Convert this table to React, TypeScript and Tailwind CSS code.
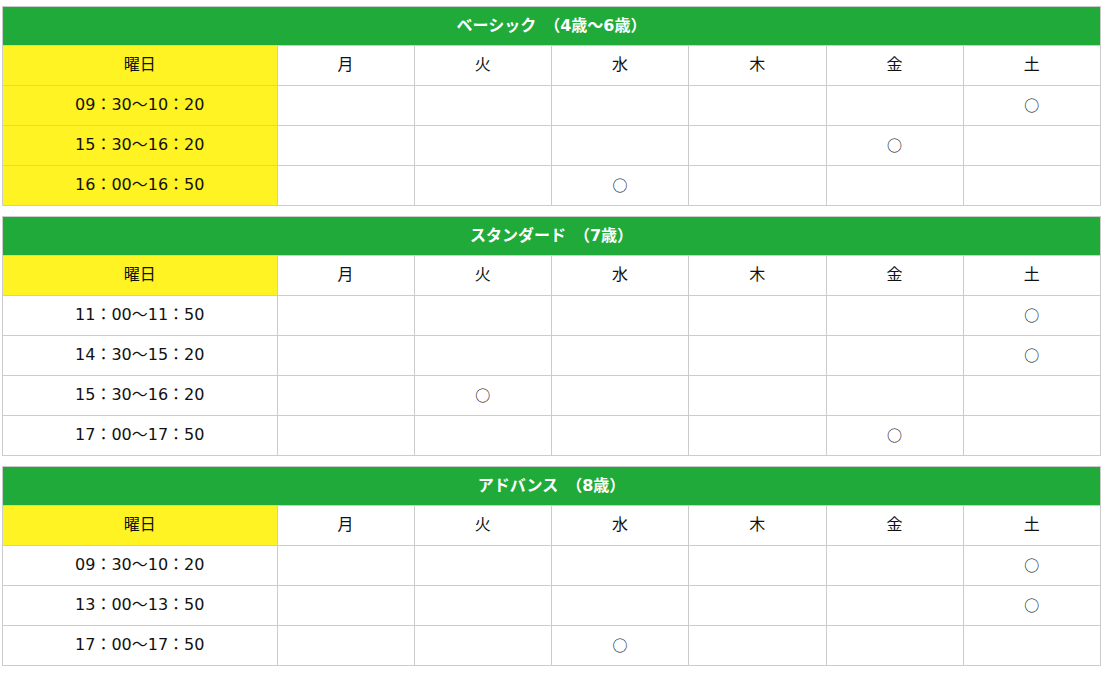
const days = ['月', '火', '水', '木', '金', '土']

type Course = {
  title: string
  highlightTimes: boolean
  rows: { time: string; day: number }[]
}

const courses: Course[] = [
  {
    title: 'ベーシック　（4歳～6歳）',
    highlightTimes: true,
    rows: [
      { time: '09：30～10：20', day: 5 },
      { time: '15：30～16：20', day: 4 },
      { time: '16：00～16：50', day: 2 },
    ],
  },
  {
    title: 'スタンダード　（7歳）',
    highlightTimes: false,
    rows: [
      { time: '11：00～11：50', day: 5 },
      { time: '14：30～15：20', day: 5 },
      { time: '15：30～16：20', day: 1 },
      { time: '17：00～17：50', day: 4 },
    ],
  },
  {
    title: 'アドバンス　（8歳）',
    highlightTimes: false,
    rows: [
      { time: '09：30～10：20', day: 5 },
      { time: '13：00～13：50', day: 5 },
      { time: '17：00～17：50', day: 2 },
    ],
  },
]

const cell = 'border border-[#cccccc] p-0 pb-[1px] text-center align-middle'

function Schedule({ course }: { course: Course }) {
  return (
    <table className="w-full table-fixed border-collapse">
      <colgroup>
        <col className="w-[25%]" />
        {days.map((d) => (
          <col key={d} />
        ))}
      </colgroup>
      <tbody>
        <tr>
          <th colSpan={7} className={`${cell} h-[39px] bg-[#20aa3a] text-white font-bold`}>
            {course.title}
          </th>
        </tr>
        <tr>
          <td className={`${cell} h-[40px] bg-[#fff323]`}>曜日</td>
          {days.map((d) => (
            <td key={d} className={`${cell} h-[40px]`}>
              {d}
            </td>
          ))}
        </tr>
        {course.rows.map((row, i) => (
          <tr key={i}>
            <td className={`${cell} h-[40px] ${course.highlightTimes ? 'bg-[#fff323]' : ''}`}>{row.time}</td>
            {days.map((d, j) => (
              <td key={d} className={`${cell} h-[40px]`}>
                {j === row.day ? <span className="font-['Noto_Sans_CJK_JP'] text-[15px]">○</span> : ''}
              </td>
            ))}
          </tr>
        ))}
      </tbody>
    </table>
  )
}

export default function App() {
  return (
    <div
      className="w-[1099px] ml-[2px] pt-[6px] flex flex-col gap-[10px] text-[16px] text-[#111] leading-none"
      style={{ fontFamily: '"DejaVu Sans", "Noto Sans CJK JP", sans-serif' }}
    >
      {courses.map((c) => (
        <Schedule key={c.title} course={c} />
      ))}
    </div>
  )
}
